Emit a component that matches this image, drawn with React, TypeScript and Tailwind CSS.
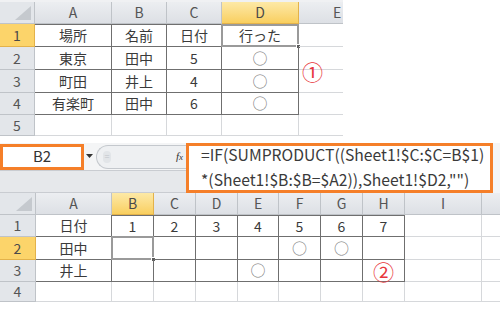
import React from "react";

type Range = { r0: number; r1: number; c0: number; c1: number };

const FONT = { fontFamily: '"Noto Sans CJK JP", "Liberation Sans", sans-serif' };
const GRID = "#d6d8db";
const DARK = "#6f6f6f";

function inRange(r: number, c: number, rg: Range) {
  return r >= rg.r0 && r <= rg.r1 && c >= rg.c0 && c <= rg.c1;
}

type SheetProps = {
  cols: string[];
  colWidths: number[];
  rowHeights: number[];
  headerHeight: number;
  rowHeaderWidth: number;
  data: string[][];
  ranges: Range[];
  active: { r: number; c: number };
  width: number;
};

function Sheet({ cols, colWidths, rowHeights, headerHeight, rowHeaderWidth, data, ranges, active, width }: SheetProps) {
  const gridCols = [rowHeaderWidth, ...colWidths].map((w) => `${w}px`).join(" ");
  const gridRows = [headerHeight, ...rowHeights].map((h) => `${h}px`).join(" ");
  const dark = (r: number, c: number) => ranges.some((rg) => inRange(r, c, rg));
  const rightDark = (r: number, c: number) => dark(r, c) || dark(r, c + 1);
  const bottomDark = (r: number, c: number) => dark(r, c) || dark(r + 1, c);

  return (
    <div className="overflow-hidden bg-white" style={{ width }}>
      <div className="grid" style={{ gridTemplateColumns: gridCols, gridTemplateRows: gridRows }}>
        {/* corner */}
        <div className="relative border-r border-b border-[#bfc3c8] bg-[#e3e6ea]">
          <svg className="absolute right-[3px] bottom-[3px]" width="16" height="14" viewBox="0 0 16 14">
            <polygon points="16,0 16,14 0,14" fill="#c5c9ce" />
          </svg>
        </div>
        {cols.map((c, ci) => (
          <div
            key={ci}
            className={
              "flex items-center justify-center border-r border-b text-[14px] " +
              (ci === active.c
                ? "border-[#e3b24a] bg-gradient-to-b from-[#fde9a6] to-[#f9cf5e] text-[#4a4a4a]"
                : "border-[#bfc3c8] bg-gradient-to-b from-[#eceef1] to-[#dde0e5] text-[#555]")
            }
          >
            {c}
          </div>
        ))}
        {rowHeights.map((_, ri) => (
          <React.Fragment key={ri}>
            <div
              className={
                "flex items-center justify-center border-r border-b text-[14px] " +
                (ri === active.r
                  ? "border-[#e3b24a] bg-[#fcd46a] text-[#4a4a4a]"
                  : "border-[#bfc3c8] bg-[#e3e6ea] text-[#555]")
              }
            >
              {ri + 1}
            </div>
            {cols.map((_, ci) => {
              const v = data[ri]?.[ci] ?? "";
              const isMark = v === "○";
              return (
                <div
                  key={ci}
                  className={
                    "relative flex items-center justify-center whitespace-nowrap " +
                    (isMark ? "text-[15px] text-[#808080]" : "text-[14px] text-[#3a3a3a]")
                  }
                  style={{
                    borderRight: `1px solid ${rightDark(ri, ci) ? DARK : GRID}`,
                    borderBottom: `1px solid ${bottomDark(ri, ci) ? DARK : GRID}`,
                    borderTop: ri === 0 && dark(ri, ci) ? `1px solid ${DARK}` : undefined,
                  }}
                >
                  {v}
                  {ri === active.r && ci === active.c && (
                    <>
                      <div className="pointer-events-none absolute -left-[1px] -top-[1px] -right-[1px] -bottom-[1px] border-2 border-[#9a9a9a]" />
                      <div className="absolute -right-[3px] -bottom-[3px] h-[5px] w-[5px] border border-white bg-[#5a5a5a]" />
                    </>
                  )}
                </div>
              );
            })}
          </React.Fragment>
        ))}
      </div>
    </div>
  );
}

function FormulaBar() {
  return (
    <div className="flex h-[50px] w-[500px]">
      <div className="flex w-[186px] flex-col">
        <div className="flex h-[27px] items-center bg-[#f4f5f6]">
          <div className="flex h-[26px] w-[84px] items-center justify-center border-[3px] border-[#f57f29] bg-white text-[15px] text-[#333]">
            B2
          </div>
          <svg className="ml-[2px]" width="7" height="5" viewBox="0 0 7 5">
            <polygon points="0,0 7,0 3.5,4" fill="#333" />
          </svg>
          <div className="relative ml-[3px] flex h-[24px] flex-1 items-center rounded-l-full border border-r-0 border-[#c4c8cd] bg-[#eef0f2] pl-[6px]">
            <div className="flex h-[12px] w-[8px] items-center justify-center rounded-full bg-[#e2e5e8] text-[9px] leading-none text-[#c0c4c8]">
              =
            </div>
            <span
              className="ml-auto mr-[3px] text-[11px] italic text-[#333]"
              style={{ fontFamily: '"Liberation Serif", serif' }}
            >
              f<span className="text-[9px]">x</span>
            </span>
          </div>
        </div>
        <div className="flex-1 border-t border-b border-[#c9ccd1] bg-[#e6e8eb]" />
      </div>
      <div
        className="flex w-[307px] flex-col justify-center border-[3px] border-[#f57f29] bg-white pl-[12px] text-[15.7px] leading-[25px] text-[#3a3a3a]"
        style={FONT}
      >
        <div className="-mt-[2px] whitespace-nowrap">=IF(SUMPRODUCT((Sheet1!$C:$C=B$1)</div>
        <div className="whitespace-nowrap">*(Sheet1!$B:$B=$A2)),Sheet1!$D2,"")</div>
      </div>
      <div className="flex-1 bg-[#f4f5f6]" />
    </div>
  );
}

export default function App() {
  const topData = [
    ["場所", "名前", "日付", "行った", ""],
    ["東京", "田中", "5", "○", ""],
    ["町田", "井上", "4", "○", ""],
    ["有楽町", "田中", "6", "○", ""],
    ["", "", "", "", ""],
  ];
  const bottomData = [
    ["日付", "1", "2", "3", "4", "5", "6", "7", "", ""],
    ["田中", "", "", "", "", "○", "○", "", "", ""],
    ["井上", "", "", "", "○", "", "", "", "", ""],
    ["", "", "", "", "", "", "", "", "", ""],
  ];

  return (
    <div className="relative h-[312px] w-[500px] overflow-hidden bg-white" style={FONT}>
      <div className="h-[2px] w-[343px] bg-[#f0f1f3]" />
      <Sheet
        cols={["A", "B", "C", "D", "E"]}
        colWidths={[77, 55, 55, 77, 77]}
        headerHeight={22}
        rowHeights={[23, 23, 23, 22, 21]}
        rowHeaderWidth={35}
        data={topData}
        ranges={[{ r0: 0, r1: 3, c0: 0, c1: 3 }]}
        active={{ r: 0, c: 3 }}
        width={343}
      />
      <div className="h-[7px]" />
      <FormulaBar />
      <Sheet
        cols={["A", "B", "C", "D", "E", "F", "G", "H", "I", ""]}
        colWidths={[76, 42, 42, 42, 41, 42, 42, 42, 77, 77]}
        headerHeight={22}
        rowHeights={[22, 23, 22, 20]}
        rowHeaderWidth={36}
        data={bottomData}
        ranges={[
          { r0: 0, r1: 2, c0: 1, c1: 7 },
          { r0: 1, r1: 2, c0: 0, c1: 0 },
        ]}
        active={{ r: 1, c: 1 }}
        width={500}
      />

      {/* callout numbers */}
      <div className="absolute left-[302px] top-[58px] text-[21px] leading-[26px] text-[#e8363c]">①</div>
      <div className="absolute left-[373px] top-[258px] text-[21px] leading-[26px] text-[#e8363c]">②</div>
    </div>
  );
}
